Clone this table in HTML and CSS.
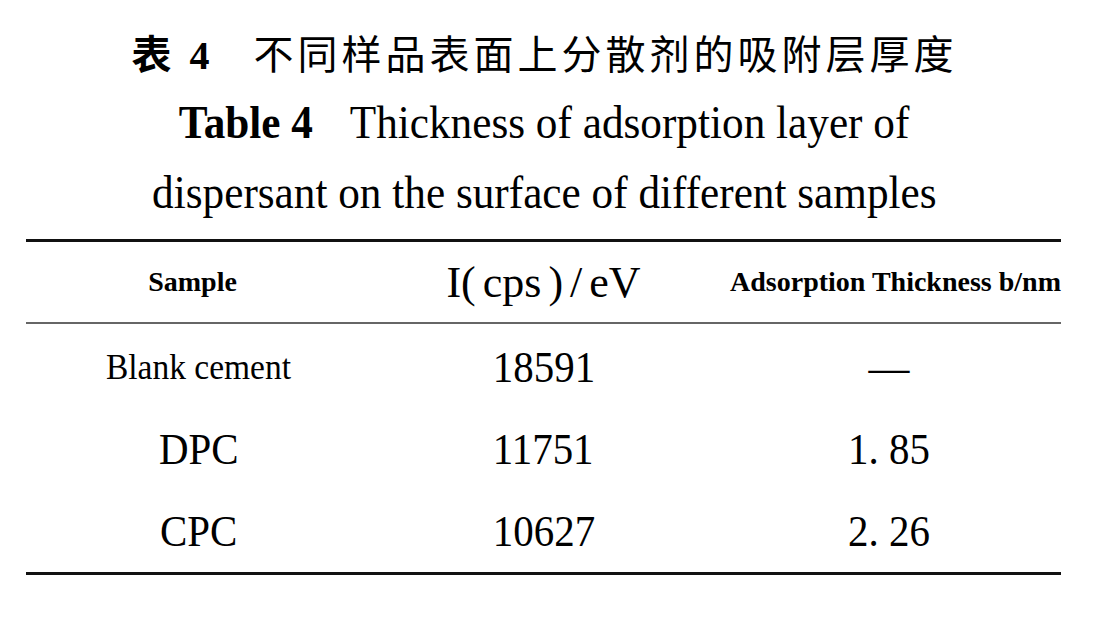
FILE: index.html
```html
<!DOCTYPE html>
<html lang="zh-CN">
<head>
  <meta charset="UTF-8" />
  <title>表 4 不同样品表面上分散剂的吸附层厚度</title>
  <link rel="stylesheet" href="styles.css">
</head>
<body>
  <div class="page">
    <div class="caption">
      <div class="caption__cn"><b>表 4</b><span class="gap"></span>不同样品表面上分散剂的吸附层厚度</div>
      <div class="caption__en"><span class="squeeze"><b>Table 4</b><span class="gap"></span>Thickness of adsorption layer of</span></div>
      <div class="caption__en"><span class="squeeze">dispersant on the surface of different samples</span></div>
    </div>

    <div class="data">
      <div class="data__row data__row--head">
        <div class="cell cell--left"><span class="head">Sample</span></div>
        <div class="cell"><span class="unit">I(<i class="sp"></i>cps<i class="sp"></i>)<i class="sp"></i>/<i class="sp"></i>eV</span></div>
        <div class="cell cell--right"><span class="head">Adsorption Thickness b/nm</span></div>
      </div>
      <div class="data__body">
        <div class="data__row">
          <div class="cell"><span class="squeeze name">Blank cement</span></div>
          <div class="cell"><span class="squeeze num">18591</span></div>
          <div class="cell"><span class="squeeze num">—</span></div>
        </div>
        <div class="data__row">
          <div class="cell"><span class="squeeze num">DPC</span></div>
          <div class="cell"><span class="squeeze num">11751</span></div>
          <div class="cell"><span class="squeeze num">1.&nbsp;85</span></div>
        </div>
        <div class="data__row">
          <div class="cell"><span class="squeeze num">CPC</span></div>
          <div class="cell"><span class="squeeze num">10627</span></div>
          <div class="cell"><span class="squeeze num">2.&nbsp;26</span></div>
        </div>
      </div>
    </div>
  </div>
</body>
</html>
```

FILE: styles.css
```css
body {
  margin: 0;
  background: #fff;
  color: #000;
  font-family: "Liberation Serif", "Noto Sans CJK SC", serif;
}

.page {
  width: 1111px;
  height: 621px;
}

/* caption */
.caption {
  text-align: center;
  padding-top: 17px;
  padding-right: 22px;
}
.caption__cn {
  font-family: "Noto Sans CJK SC", sans-serif;
  font-size: 40px;
  line-height: 70px;
  height: 70px;
  letter-spacing: 4px;
}
.caption__cn b {
  font-family: "Liberation Serif", "Noto Sans CJK SC", serif;
  font-weight: 700;
}
.caption__en {
  font-size: 47px;
  line-height: 70px;
  height: 70px;
}
.caption__en .squeeze {
  transform: scaleX(0.92);
}
.gap {
  display: inline-block;
  width: 40px;
}
.squeeze {
  display: inline-block;
  white-space: nowrap;
  transform: scaleX(0.93);
}

/* table */
.data {
  margin: 12px 0 0 26px;
  width: 1035px;
  border-top: 3px solid #111;
  border-bottom: 3px solid #111;
}
.data__row {
  display: grid;
  grid-template-columns: 345px 345px 345px;
  align-items: center;
  height: 82px;
}
.data__row--head {
  height: 80px;
  border-bottom: 2px solid #666;
}
.data__body {
  padding-top: 2px;
}
.cell {
  text-align: center;
  white-space: nowrap;
}
.cell--left {
  padding-right: 12px;
}
.cell--right {
  padding-left: 14px;
}
.head {
  font-weight: 700;
  font-size: 28px;
}
.unit {
  font-size: 44px;
}
.sp {
  display: inline-block;
  width: 7px;
}
.name {
  font-size: 36px;
}
.num {
  font-size: 44px;
}
```
